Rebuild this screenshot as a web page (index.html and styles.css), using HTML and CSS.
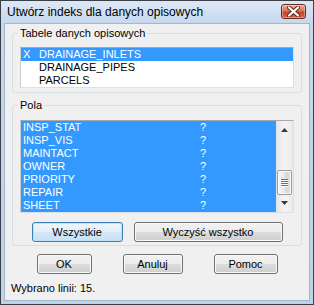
FILE: index.html
```html
<!DOCTYPE html>
<html lang="pl">
<head>
  <meta charset="UTF-8">
  <title>Utwórz indeks dla danych opisowych</title>
  <link rel="stylesheet" href="styles.css">
</head>
<body>
  <div class="window">
    <div class="titlebar">
      <span class="title">Utwórz indeks dla danych opisowych</span>
      <button class="close" title="Zamknij">
        <svg width="13" height="11" viewBox="0 0 13 11">
          <path d="M2 1.5 L11 9.5 M11 1.5 L2 9.5" stroke="#5a2a22" stroke-width="4" stroke-linecap="round"/>
          <path d="M2 1.5 L11 9.5 M11 1.5 L2 9.5" stroke="#ffffff" stroke-width="2.2" stroke-linecap="round"/>
        </svg>
      </button>
    </div>

    <div class="client">
      <fieldset class="group">
        <legend>Tabele danych opisowych</legend>
        <ul class="listbox tables">
          <li class="selected"><span class="mark">X</span>DRAINAGE_INLETS</li>
          <li><span class="mark"></span>DRAINAGE_PIPES</li>
          <li><span class="mark"></span>PARCELS</li>
        </ul>
      </fieldset>

      <fieldset class="group fields-group">
        <legend>Pola</legend>
        <div class="listbox fields">
          <ul class="rows">
            <li class="selected"><span class="name">INSP_STAT</span><span>?</span></li>
            <li class="selected"><span class="name">INSP_VIS</span><span>?</span></li>
            <li class="selected"><span class="name">MAINTACT</span><span>?</span></li>
            <li class="selected"><span class="name">OWNER</span><span>?</span></li>
            <li class="selected"><span class="name">PRIORITY</span><span>?</span></li>
            <li class="selected"><span class="name">REPAIR</span><span>?</span></li>
            <li class="selected"><span class="name">SHEET</span><span>?</span></li>
          </ul>
          <div class="scrollbar">
            <svg class="arrow" width="7" height="4" viewBox="0 0 7 4"><path d="M0 4 L3.5 0 L7 4 Z" fill="#3a3a3a"/></svg>
            <div class="track">
              <div class="thumb">
                <span></span><span></span><span></span><span></span>
              </div>
            </div>
            <svg class="arrow" width="7" height="4" viewBox="0 0 7 4"><path d="M0 0 L3.5 4 L7 0 Z" fill="#3a3a3a"/></svg>
          </div>
        </div>
        <div class="btn-row">
          <button class="btn default w-all">Wszystkie</button>
          <button class="btn w-clear">Wyczyść wszystko</button>
        </div>
      </fieldset>

      <div class="btn-row bottom">
        <button class="btn w-ok">OK</button>
        <button class="btn w-cancel">Anuluj</button>
        <button class="btn w-help">Pomoc</button>
      </div>

      <p class="status">Wybrano linii: 15.</p>
    </div>
  </div>
</body>
</html>
```

FILE: styles.css
```css
* {
  box-sizing: border-box;
}

body {
  margin: 0;
  font-family: 'Liberation Sans', Arial, sans-serif;
  font-size: 11px;
  color: #000;
  background: #fff;
}

.window {
  width: 314px;
  height: 305px;
  border: 1px solid #3b4047;
  background: linear-gradient(#dde8f5, #c5d8ee 22px, #bcd3ec);
  padding: 0 3px 3px 3px;
  display: flex;
  flex-direction: column;
}

.titlebar {
  height: 22px;
  display: flex;
  align-items: center;
  justify-content: space-between;
  padding-left: 3px;
  padding-right: 4px;
}

.title {
  font-size: 12px;
  color: #000;
}

.close {
  width: 25px;
  height: 15px;
  margin-top: -2px;
  padding: 0;
  border: 1px solid #6b2b21;
  border-radius: 3px;
  background: linear-gradient(#eab0a2, #d9735f 45%, #c7452b 55%, #d3643f);
  display: flex;
  align-items: center;
  justify-content: center;
  box-shadow: inset 0 0 0 1px rgba(255, 255, 255, 0.35);
}

.client {
  flex: 1;
  background: #f0f0f0;
  border: 1px solid #a5b6c9;
  padding: 3px 7px 0 7px;
  display: flex;
  flex-direction: column;
}

.group {
  margin: 0;
  border: 1px solid #d5dfe5;
  border-radius: 3px;
  padding: 7px 7px 4px 7px;
}

.group legend {
  padding: 0 2px;
  margin-left: -2px;
  line-height: 13px;
}

.fields-group {
  margin-top: 6px;
  padding-top: 8px;
  padding-bottom: 3px;
}

.listbox {
  margin: 0;
  padding: 0;
  list-style: none;
  background: #fff;
  border: 1px solid #dcdfe4;
  border-top-color: #a7a9ad;
  border-left-color: #c9ccd1;
}

.listbox li {
  height: 13px;
  line-height: 13px;
  white-space: nowrap;
}

.tables li {
  display: flex;
  padding-left: 2px;
}

.tables .mark {
  width: 16px;
}

.selected {
  background: #3399ff;
  color: #fff;
}

.fields {
  display: flex;
  height: 93px;
}

.fields .rows {
  flex: 1;
  margin: 0;
  padding: 0;
  list-style: none;
  background: #3399ff;
}

.fields li {
  display: flex;
  padding-left: 2px;
}

.fields .name {
  width: 177px;
}

.scrollbar {
  width: 17px;
  background: linear-gradient(90deg, #e3e3e3, #f2f2f2 40%, #f2f2f2 70%, #e8e8e8);
  display: flex;
  flex-direction: column;
  align-items: center;
}

.scrollbar .arrow {
  margin: 7px 0 6px;
}

.scrollbar .arrow:last-child {
  margin: 6px 0 7px;
}

.track {
  flex: 1;
  width: 100%;
  display: flex;
  flex-direction: column;
  justify-content: flex-end;
  padding: 0 1px;
}

.thumb {
  height: 25px;
  border: 1px solid #9a9a9a;
  border-radius: 2px;
  background: linear-gradient(90deg, #f6f6f6, #e6e6e6 50%, #d8d8d8 50%, #dcdcdc);
  display: flex;
  flex-direction: column;
  align-items: center;
  justify-content: center;
  gap: 1px;
  box-shadow: inset 0 0 0 1px #fafafa;
}

.thumb span {
  width: 7px;
  height: 1px;
  background: #6d6d6d;
  box-shadow: 0 1px 0 #fff;
}

.btn-row {
  display: flex;
  justify-content: center;
  gap: 11px;
  margin-top: 9px;
}

.btn {
  height: 20px;
  padding: 0;
  font-family: 'Liberation Sans', Arial, sans-serif;
  font-size: 11px;
  color: #000;
  border: 1px solid #707070;
  border-radius: 3px;
  background: linear-gradient(#f2f2f2, #ebebeb 50%, #dddddd 50%, #cfcfcf);
  box-shadow: inset 0 0 0 1px #fbfbfb;
}

.btn.default {
  border-color: #3c7fb1;
  background: linear-gradient(#eef6fc, #e2eff9 50%, #d3e8f8 50%, #c8e1f5);
  box-shadow: inset 0 0 0 1px #bde3f8;
}

.w-all { width: 91px; }
.w-clear { width: 149px; }
.w-ok { width: 55px; }
.w-cancel { width: 60px; }
.w-help { width: 64px; }

.bottom {
  gap: 31px;
  margin-top: 8px;
}

.status {
  margin: 8px 0 0 -1px;
  line-height: 13px;
}
```
